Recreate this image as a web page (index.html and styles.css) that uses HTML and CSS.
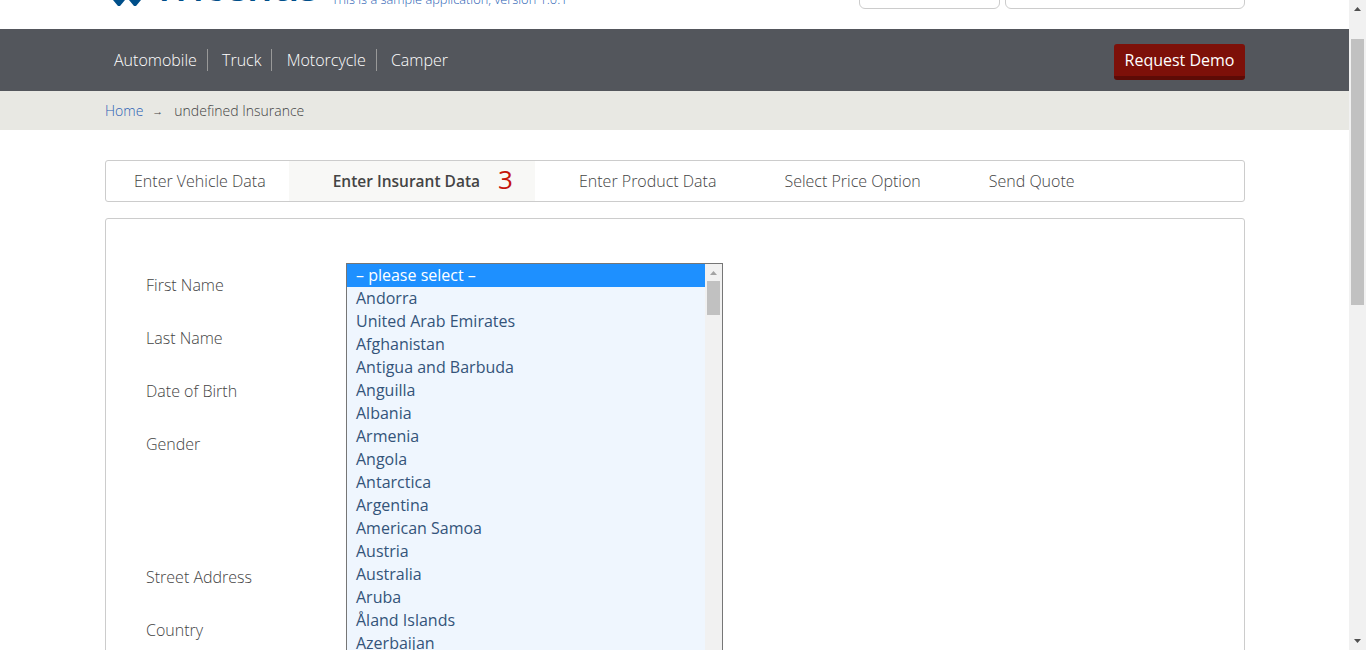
FILE: index.html
```html
<!DOCTYPE html>
<html>
<head>
<title>Enter Insurant Data</title>
<link rel="stylesheet" href="styles.css">
</head>
<body>
	<div class="page">
		<div class="content">
			<header class="top">
				<div class="brand">
					<svg class="logo-mark" width="28" height="6" viewBox="0 0 28 6"><path d="M0 0h12L7 6H5zM16 0h12l-5 6h-2z" fill="#004f8a"/></svg>
					<span class="logo-name">Tricentis</span>
					<span class="tagline">This is a sample application, version 1.0.1</span>
				</div>
				<div class="top-boxes">
					<div class="top-box top-box-small"></div>
					<div class="top-box top-box-large"></div>
				</div>
			</header>
			<nav class="mainnav">
				<ul class="navlist">
					<li><a href="#">Automobile</a></li>
					<li><a href="#">Truck</a></li>
					<li><a href="#">Motorcycle</a></li>
					<li><a href="#">Camper</a></li>
				</ul>
				<a class="demo" href="#">Request Demo</a>
			</nav>
			<div class="crumbs">
				<a href="#">Home</a>
				<span class="crumb-arrow">&rarr;</span>
				<span>undefined Insurance</span>
			</div>
			<main class="wrap">
				<div class="steps">
					<a class="step" href="#">Enter Vehicle Data</a>
					<a class="step step-active" href="#">Enter Insurant Data <span class="step-count">3</span></a>
					<a class="step" href="#">Enter Product Data</a>
					<a class="step" href="#">Select Price Option</a>
					<a class="step" href="#">Send Quote</a>
				</div>
				<section class="panel">
					<div class="labels">
						<div class="field">First Name</div>
						<div class="field">Last Name</div>
						<div class="field">Date of Birth</div>
						<div class="field field-gender">Gender</div>
						<div class="field">Street Address</div>
						<div class="field">Country</div>
					</div>
					<div class="listbox">
						<ul class="options">
							<li class="selected">&ndash; please select &ndash;</li>
							<li>Andorra</li>
							<li>United Arab Emirates</li>
							<li>Afghanistan</li>
							<li>Antigua and Barbuda</li>
							<li>Anguilla</li>
							<li>Albania</li>
							<li>Armenia</li>
							<li>Angola</li>
							<li>Antarctica</li>
							<li>Argentina</li>
							<li>American Samoa</li>
							<li>Austria</li>
							<li>Australia</li>
							<li>Aruba</li>
							<li>Åland Islands</li>
							<li>Azerbaijan</li>
						</ul>
						<div class="list-scroll">
							<svg class="list-up" width="7" height="4" viewBox="0 0 7 4"><path d="M3.5 0L7 4H0z" fill="#a3a3a3"/></svg>
							<div class="list-thumb"></div>
						</div>
					</div>
				</section>
			</main>
		</div>
		<div class="scrollbar">
			<svg class="scroll-up" width="7" height="4" viewBox="0 0 7 4"><path d="M3.5 0L7 4H0z" fill="#505050"/></svg>
			<div class="scroll-thumb"></div>
			<svg class="scroll-down" width="7" height="4" viewBox="0 0 7 4"><path d="M0 0h7L3.500 4z" fill="#505050"/></svg>
		</div>
	</div>
</body>
</html>
```

FILE: styles.css
```css
html, body {
	margin: 0;
	height: 650px;
	overflow: hidden;
}
body {
	font-family: "Open Sans", sans-serif;
	background-color: #fff;
}
ul {
	list-style: none;
	margin: 0;
	padding: 0;
}
a {
	text-decoration: none;
	color: inherit;
}
.page {
	display: flex;
	height: 650px;
}
.content {
	flex: 1;
	min-width: 0;
	overflow: hidden;
}
.scrollbar {
	width: 17px;
	background-color: #f1f1f1;
	display: flex;
	flex-direction: column;
	align-items: center;
}
.scroll-up {
	margin-top: 7px;
}
.scroll-thumb {
	width: 13px;
	height: 266px;
	margin-top: 28px;
	background-color: #c1c1c1;
}
.scroll-down {
	margin-top: auto;
	margin-bottom: 7px;
}
.top {
	height: 29px;
	padding: 0 104px 0 105px;
	display: flex;
	justify-content: space-between;
	align-items: flex-end;
	overflow: hidden;
}
.brand {
	height: 29px;
	display: flex;
	align-items: flex-end;
}
.logo-mark {
	margin: 0 0 23px 8px;
}
.logo-name {
	font-size: 40px;
	font-weight: 600;
	line-height: 40px;
	color: #004f8a;
	margin: 0 0 23px 12px;
}
.tagline {
	font-size: 12.8px;
	font-weight: 300;
	line-height: 18px;
	color: #2b5fb4;
	margin: 0 0 21px 13px;
}
.top-boxes {
	display: flex;
	gap: 5px;
	margin-bottom: 20px;
}
.top-box {
	height: 30px;
	border: 1px solid #ccc;
	border-radius: 0 0 6px 6px;
	box-sizing: border-box;
}
.top-box-small {
	width: 141px;
}
.top-box-large {
	width: 240px;
}
.mainnav {
	height: 62px;
	background-color: #53565c;
	padding: 0 104px 0 105px;
	display: flex;
	justify-content: space-between;
	align-items: center;
}
.navlist {
	display: flex;
	margin-left: 9px;
	color: #fff;
	font-size: 16px;
	font-weight: 300;
}
.navlist li {
	padding-right: 10px;
	margin-right: 14.2px;
	line-height: 22px;
	border-right: 1px solid #999;
}
.navlist li:last-child {
	border-right: none;
}
.demo {
	margin-top: 4px;
	background-color: #7d1009;
	border-bottom: 4px solid #5d0b06;
	border-radius: 3px;
	color: #fff;
	font-size: 16px;
	line-height: 32px;
	padding: 0 10.5px;
}
.crumbs {
	height: 39px;
	background-color: #e8e8e3;
	padding: 0 105px;
	display: flex;
	align-items: center;
	font-size: 14px;
	font-weight: 300;
	color: #444;
}
.crumbs a {
	color: #2b5fb4;
}
.crumb-arrow {
	margin: 0 11px 0 9px;
	font-size: 11px;
}
.wrap {
	padding: 30px 104px 0 105px;
}
.steps {
	height: 42px;
	box-sizing: border-box;
	border: 1px solid #ccc;
	border-radius: 3px;
	display: flex;
	margin-bottom: 16px;
	color: #444;
}
.step {
	padding: 0 24px 0 44px;
	font-size: 16px;
	font-weight: 300;
	line-height: 40px;
}
.step:first-child {
	padding: 0 23px 0 28px;
}
.step-active {
	background-color: #f8f8f6;
	font-size: 15.5px;
	font-weight: 600;
	padding-right: 22px;
}
.step-count {
	color: #c5140c;
	font-size: 26px;
	font-weight: 500;
	margin-left: 14px;
	vertical-align: -2px;
	line-height: 26px;
}
.panel {
	border: 1px solid #ccc;
	border-radius: 3px;
	padding: 44px 40px 0;
	display: flex;
	height: 600px;
}
.labels {
	width: 200px;
	font-size: 16px;
	font-weight: 300;
	color: #444;
}
.field {
	height: 53px;
	line-height: 44px;
}
.field-gender {
	height: 133px;
}
.listbox {
	width: 377px;
	height: 500px;
	box-sizing: border-box;
	border: 1px solid #767676;
	display: flex;
	align-items: flex-start;
}
.options {
	flex: 1;
	background-color: #eff6fe;
	color: #34547a;
	font-size: 16px;
	line-height: 23px;
}
.options li {
	padding-left: 9px;
}
.options .selected {
	background-color: #1e90ff;
	color: #fff;
}
.list-scroll {
	width: 17px;
	height: 100%;
	background-color: #f1f1f1;
	display: flex;
	flex-direction: column;
	align-items: center;
}
.list-up {
	margin-top: 7px;
}
.list-thumb {
	width: 13px;
	height: 34px;
	margin-top: 6px;
	background-color: #c1c1c1;
}
```
